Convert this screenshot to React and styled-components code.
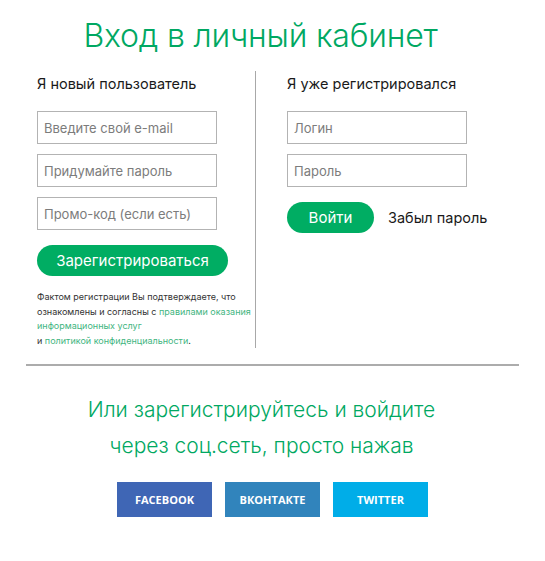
import React from 'react'
import styled, { createGlobalStyle } from 'styled-components'

const GlobalStyle = createGlobalStyle`
  body {
    margin: 0;
    background: #fff;
    font-family: Inter, "Noto Sans", sans-serif;
    color: #222;
  }
`

const Page = styled.div`
  width: 545px;
  padding: 0 26px;
  box-sizing: border-box;
`

const Title = styled.h1`
  margin: 0;
  padding: 16px 24px 0 0;
  text-align: center;
  font-weight: 300;
  font-size: 32px;
  line-height: 40px;
  color: #00a862;
  letter-spacing: -0.2px;
`

const Columns = styled.div`
  display: grid;
  grid-template-columns: 230px 1fr;
  margin-top: 15px;
`

const Column = styled.div`
  padding-left: ${props => props.$inset}px;
  border-right: ${props => props.$divided ? '1px solid #a8a8a8' : 'none'};
`

const Heading = styled.div`
  font-size: 14.5px;
  font-weight: 400;
  line-height: 26px;
  color: #1a1a1a;
  margin-bottom: 14px;
`

const Fields = styled.div`
  display: flex;
  flex-direction: column;
  gap: 10px;
`

const Input = styled.input`
  width: 180px;
  height: 33px;
  box-sizing: border-box;
  border: 1px solid #b3b3b3;
  padding: 0 6px;
  font-family: inherit;
  font-size: 13px;
  color: #333;
  outline: none;
  &::placeholder {
    color: #7c7c7c;
  }
`

const PillButton = styled.button`
  height: 31px;
  width: ${props => props.$width}px;
  padding: 0;
  border: none;
  border-radius: 16px;
  background: #00ad63;
  color: #fff;
  font-family: inherit;
  font-size: 15px;
  font-weight: 400;
  cursor: pointer;
`

const Actions = styled.div`
  display: flex;
  align-items: center;
  gap: 14px;
  margin-top: 15px;
`

const ForgotLink = styled.a`
  font-size: 14.5px;
  color: #1a1a1a;
  text-decoration: none;
`

const Note = styled.p`
  margin: 14px 0 0;
  font-size: 9px;
  line-height: 14.5px;
  color: #333;

  a {
    color: #3fb57f;
    text-decoration: none;
  }
`

const Rule = styled.hr`
  margin: 16px 0 0;
  border: none;
  border-top: 2px solid #acacac;
`

const SocialTitle = styled.h2`
  margin: 26px 0 0;
  padding-right: 22px;
  text-align: center;
  font-weight: 300;
  font-size: 21px;
  line-height: 36px;
  color: #00a862;
`

const SocialRow = styled.div`
  display: flex;
  justify-content: center;
  gap: 13px;
  margin-top: 18px;
`

const SocialButton = styled.a`
  width: 95px;
  height: 35px;
  display: flex;
  align-items: center;
  justify-content: center;
  background: ${props => props.$bg};
  color: #fff;
  font-family: "Open Sans", sans-serif;
  font-weight: 700;
  font-size: 11px;
  text-decoration: none;
`

const App = () => {
  return (
    <Page>
      <GlobalStyle />
      <Title>Вход в личный кабинет</Title>
      <Columns>
        <Column $inset={11} $divided>
          <Heading>Я новый пользователь</Heading>
          <Fields>
            <Input placeholder="Введите свой e-mail" />
            <Input placeholder="Придумайте пароль" />
            <Input placeholder="Промо-код (если есть)" />
          </Fields>
          <Actions>
            <PillButton $width={191}>Зарегистрироваться</PillButton>
          </Actions>
          <Note>
            Фактом регистрации Вы подтверждаете, что<br />
            ознакомлены и согласны с <a href="#">правилами оказания<br />информационных услуг</a><br />
            и <a href="#">политикой конфиденциальности</a>.
          </Note>
        </Column>
        <Column $inset={31}>
          <Heading>Я уже регистрировался</Heading>
          <Fields>
            <Input placeholder="Логин" />
            <Input placeholder="Пароль" />
          </Fields>
          <Actions>
            <PillButton $width={87}>Войти</PillButton>
            <ForgotLink href="#">Забыл пароль</ForgotLink>
          </Actions>
        </Column>
      </Columns>
      <Rule />
      <SocialTitle>
        Или зарегистрируйтесь и войдите<br />
        через соц.сеть, просто нажав
      </SocialTitle>
      <SocialRow>
        <SocialButton href="#" $bg="#3f66b5">FACEBOOK</SocialButton>
        <SocialButton href="#" $bg="#3184bc">ВКОНТАКТЕ</SocialButton>
        <SocialButton href="#" $bg="#00ade8">TWITTER</SocialButton>
      </SocialRow>
    </Page>
  )
}

export default App
